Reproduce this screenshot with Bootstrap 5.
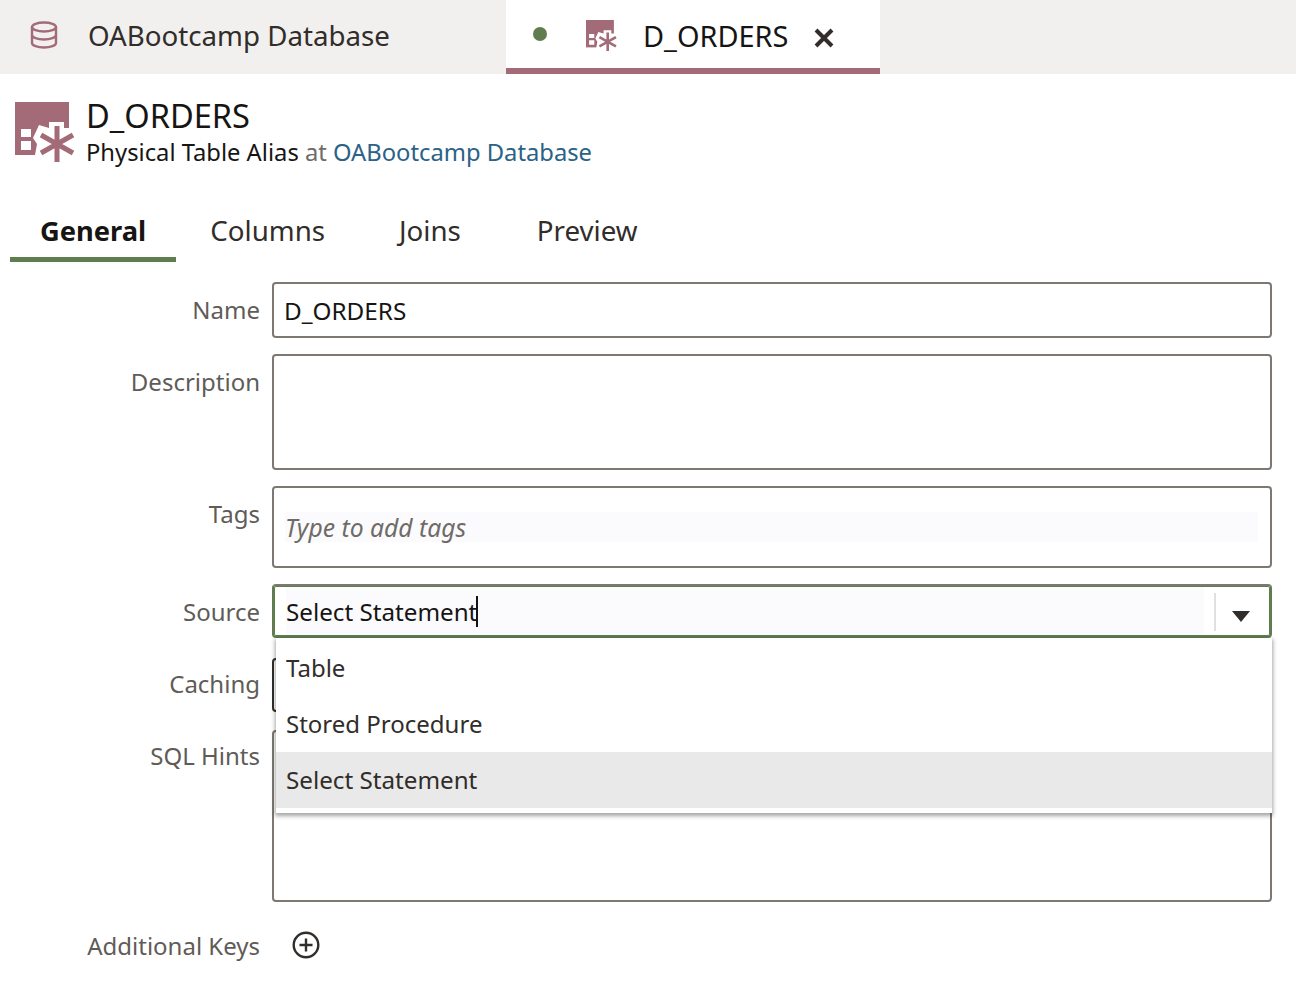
<!doctype html>
<html lang="en">
<head>
<meta charset="utf-8">
<title>D_ORDERS</title>
<link href="https://cdn.jsdelivr.net/npm/bootstrap@5.3.0/dist/css/bootstrap.min.css" rel="stylesheet">
<style>
html,body{height:100%;}
body{font-family:"Noto Sans","Open Sans",sans-serif;color:#161513;background:#fff;overflow:hidden;font-size:25px;}
.topbar{height:74px;background:#f2f0ee;}
.dbtab{width:506px;padding-left:30px;padding-bottom:2px;color:#312d2a;font-size:27.7px;}
.dbtab svg{margin-right:30px;margin-top:-2px;}
.edtab{width:374px;height:74px;background:#fff;border-bottom:6px solid #a36b77;padding-left:27px;padding-top:4px;font-size:28.9px;}
.dot{width:14px;height:14px;border-radius:50%;background:#5f7d4f;margin-right:39px;margin-bottom:4px;}
.edtab .smicon{margin-right:26px;margin-bottom:2px;}
.closer{margin-left:25px;margin-top:4px;}
.headline{padding:24px 0 0 15px;height:125px;}
.headline svg{margin-right:11px;margin-top:4px;}
.titletxt{font-size:32.6px;line-height:36px;}
.subtxt{font-size:23.75px;line-height:36px;}
.subtxt .dim{color:#6f6b67;}
.subtxt a{color:#2b6286;text-decoration:none;}
.tabstrip{padding-left:10px;height:63px;}
.onetab{height:63px;padding:7px 36px 7px 37px;font-size:27.7px;color:#312d2a;display:flex;align-items:center;}
.onetab.on{font-weight:700;font-size:27.3px;color:#161513;border-bottom:5px solid #5f7d4f;padding:8px 30px 1px 30px;}
.onetab.t2{padding-left:34px;padding-right:37px;}
.onetab.t3{padding-right:39px;}
.formwrap{padding-top:20px;position:relative;}
.frow{display:flex;margin-bottom:16px;}
.flabel{width:260px;text-align:right;color:#5f5c58;font-size:24px;flex:none;}
.ffield{margin-left:12px;width:1000px;border:2px solid #7d7872;border-radius:4px;background:#fff;flex:none;}
.r-name .ffield{height:56px;padding:0 10px;line-height:54px;font-size:24.3px;color:#161513;}
.r-name .flabel{line-height:56px;}
.r-desc .ffield{height:116px;}
.r-desc .flabel{line-height:56px;}
.r-tags .ffield{height:82px;padding:24px 12px 0 11px;}
.r-tags .flabel{line-height:56px;}
.tagin{height:30px;background:#fbfbfe;font-style:italic;color:#6f6b67;font-size:24.7px;line-height:32px;}
.r-src{margin-bottom:20px;}
.r-src .ffield{height:54px;border-color:#5f7d4f;border-top-color:#7d7872;box-shadow:inset 0 0 0 1px #5f7d4f;padding:0;display:flex;align-items:stretch;position:relative;z-index:2;}
.r-src .flabel{height:54px;line-height:56px;}
.srcin{width:918px;margin:1px 0 1px 12px;background:#fbfbfe;font-size:24.2px;line-height:50px;color:#161513;}
.caret-bar{border-right:2px solid #161513;height:31px;display:inline-block;vertical-align:-6px;margin-left:-1px;}
.sep{width:2px;height:38px;background:#e0e0e0;margin:7px 0 0 10px;}
.tri{width:0;height:0;border-left:9px solid transparent;border-right:9px solid transparent;border-top:11px solid #312d2a;margin:25px 0 0 16px;}
.r-cache{margin-bottom:18px;}
.r-cache .ffield{height:54px;border-color:#312d2a;}
.r-cache .flabel{height:54px;line-height:52px;}
.r-hints{margin-bottom:26px;}
.r-hints .ffield{height:172px;}
.r-hints .flabel{line-height:52px;}
.r-keys{align-items:center;}
.r-keys .flabel{line-height:36px;}
.r-keys svg{margin-left:32px;margin-bottom:2px;}
.droplist{position:absolute;left:276px;top:376px;width:996px;height:175px;background:#fff;z-index:3;box-shadow:0 2px 4px 1px rgba(0,0,0,.35);padding-top:2px;}
.dropitem{height:56px;line-height:56px;padding-left:10px;font-size:24px;color:#312d2a;}
.dropitem.sel{background:#e9e9e9;font-size:24.2px;}
</style>
</head>
<body>
<div class="topbar d-flex">
  <div class="dbtab d-flex align-items-center">
    <svg width="28" height="28" viewBox="0 0 28 28" fill="none" stroke="#a36b77" stroke-width="2.4"><ellipse cx="14" cy="6" rx="12" ry="4.5"/><path d="M2 6v16c0 2.5 5.4 4.5 12 4.5s12-2 12-4.5V6"/><path d="M2 14c0 2.5 5.4 4.5 12 4.5s12-2 12-4.5"/></svg>
    <span>OABootcamp Database</span>
  </div>
  <div class="edtab d-flex align-items-center">
    <span class="dot"></span>
    <svg class="smicon" width="31" height="31" viewBox="0 0 60 60"><path fill="#a36b77" d="M0 0H54V53H0Z"/><path fill="#fff" d="M20 53L22 42 18 36 24 23 34 26V20H49V26H60V60H20Z"/><path fill="#fff" d="M6 27H16V35H6ZM6 39H16V48H6Z"/><path stroke="#a36b77" stroke-width="5" d="M42 24V60M26 33L58 51M58 33L26 51"/></svg>
    <span>D_ORDERS</span>
    <svg class="closer" width="22" height="22" viewBox="0 0 22 22"><path d="M3 3L19 19M19 3L3 19" stroke="#312d2a" stroke-width="4"/></svg>
  </div>
</div>
<div class="headline d-flex">
  <svg width="60" height="60" viewBox="0 0 60 60"><path fill="#a36b77" d="M0 0H54V53H0Z"/><path fill="#fff" d="M20 53L22 42 18 36 24 23 34 26V20H49V26H60V60H20Z"/><path fill="#fff" d="M6 27H16V35H6ZM6 39H16V48H6Z"/><path stroke="#a36b77" stroke-width="5" d="M42 24V60M26 33L58 51M58 33L26 51"/></svg>
  <div>
    <div class="titletxt">D_ORDERS</div>
    <div class="subtxt">Physical Table Alias <span class="dim">at</span> <a href="#">OABootcamp Database</a></div>
  </div>
</div>
<div class="tabstrip d-flex">
  <div class="onetab on">General</div>
  <div class="onetab t2">Columns</div>
  <div class="onetab t3">Joins</div>
  <div class="onetab">Preview</div>
</div>
<div class="formwrap">
  <div class="frow r-name"><div class="flabel">Name</div><div class="ffield">D_ORDERS</div></div>
  <div class="frow r-desc"><div class="flabel">Description</div><div class="ffield"></div></div>
  <div class="frow r-tags"><div class="flabel">Tags</div><div class="ffield"><div class="tagin">Type to add tags</div></div></div>
  <div class="frow r-src"><div class="flabel">Source</div><div class="ffield"><div class="srcin">Select Statement<span class="caret-bar"></span></div><div class="sep"></div><div class="tri"></div></div></div>
  <div class="frow r-cache"><div class="flabel">Caching</div><div class="ffield"></div></div>
  <div class="frow r-hints"><div class="flabel">SQL Hints</div><div class="ffield"></div></div>
  <div class="frow r-keys"><div class="flabel">Additional Keys</div><svg width="28" height="28" viewBox="0 0 28 28" fill="none" stroke="#312d2a" stroke-width="2.4"><circle cx="14" cy="14" r="12.3"/><path d="M14 7.5v13M7.5 14h13"/></svg></div>
  <div class="droplist">
    <div class="dropitem">Table</div>
    <div class="dropitem">Stored Procedure</div>
    <div class="dropitem sel">Select Statement</div>
  </div>
</div>
<script src="https://cdn.jsdelivr.net/npm/bootstrap@5.3.0/dist/js/bootstrap.bundle.min.js"></script>
</body>
</html>
